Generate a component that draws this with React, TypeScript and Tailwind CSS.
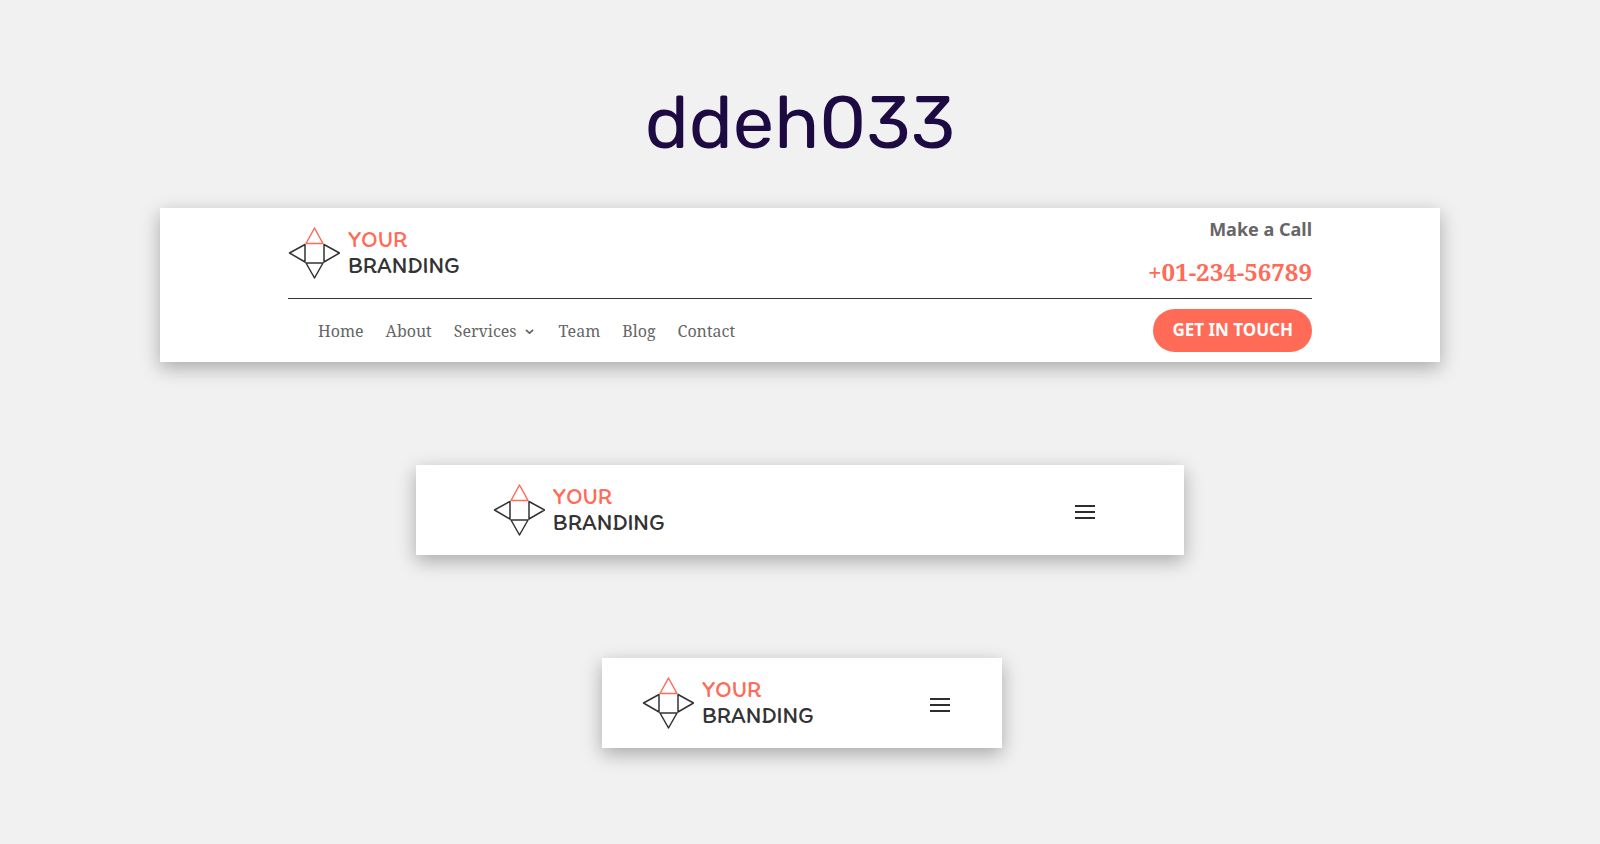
function Logo() {
  return (
    <a href="#" className="flex items-center gap-2">
      <svg viewBox="0 0 52 52" className="size-[52px] fill-none" strokeWidth="1.5" strokeLinejoin="round" aria-hidden="true">
        <path className="stroke-[#333333]" d="M17 17.5v17.500L1.500 26zM36 17.500v17.500L51.500 26zM18 36h17L26.500 51z" />
        <path className="stroke-[#ff6b57]" d="M18 16.500h17L26.500 1z" />
      </svg>
      <span className="pb-0.5 font-['Itim','Inter',sans-serif] text-[23px] leading-[26px] text-[#333333]">
        <span className="block text-[#ff6b57]">YOUR</span>
        <span className="block">BRANDING</span>
      </span>
    </a>
  );
}

function MenuButton() {
  return (
    <button type="button" aria-label="Open menu" className="mt-1 mr-3 flex w-5 cursor-pointer flex-col gap-1">
      <span className="h-0.5 w-full bg-[#2e2e2e]" />
      <span className="h-0.5 w-full bg-[#2e2e2e]" />
      <span className="h-0.5 w-full bg-[#2e2e2e]" />
    </button>
  );
}

const card = "bg-white shadow-[0_6px_18px_rgba(0,0,0,0.3)]";

function CompactHeader({ width }: { width: string }) {
  return (
    <header className={`${card} ${width}`}>
      <div className="mx-auto flex w-4/5 items-center justify-between pt-[18px] pb-[18px]">
        <Logo />
        <MenuButton />
      </div>
    </header>
  );
}

const links = ["Home", "About", "Services", "Team", "Blog", "Contact"];

export default function App() {
  return (
    <main className="flex min-h-screen flex-col items-center bg-[#f1f1f1] pt-20 pb-24">
      <h1 className="font-['Rubik','Inter',sans-serif] text-[74px] leading-[86px] text-[#1d0a42]">ddeh033</h1>

      <header className={`${card} mt-[42px] w-4/5`}>
        <div className="mx-auto w-4/5">
          <div className="flex justify-between border-b border-[#333333]">
            <div className="pt-[18px] pb-[18px]">
              <Logo />
            </div>
            <div className="pt-[7px] text-right">
              <p className="font-['Noto_Sans',sans-serif] text-[18px] leading-7 font-bold text-[#666666]">Make a Call</p>
              <a
                href="tel:+0123456789"
                className="mt-[13px] block font-['Noto_Serif','Liberation_Serif',serif] text-[24px] leading-8 font-bold text-[#ff6b57]"
              >
                +01-234-56789
              </a>
            </div>
          </div>
          <div className="flex items-center justify-between py-[10px]">
            <nav className="ml-[30px] flex gap-[22px] font-['Noto_Serif','Liberation_Serif',serif] text-[16px] leading-6 text-[#666666]">
              {links.map((label) => (
                <a key={label} href="#" className="flex items-center gap-2">
                  {label}
                  {label === "Services" && (
                    <svg viewBox="0 0 10 6" className="mt-0.5 mr-[3px] w-[9px] fill-none stroke-[#666666]" strokeWidth="2" aria-hidden="true">
                      <path d="M1 1l4 3.600L9 1" />
                    </svg>
                  )}
                </a>
              ))}
            </nav>
            <button
              type="button"
              className="cursor-pointer rounded-full bg-[#ff6b57] px-[19px] pt-[7px] pb-[9px] font-['Noto_Sans',sans-serif] text-[17px] leading-[27px] font-bold text-white"
            >
              GET IN TOUCH
            </button>
          </div>
        </div>
      </header>

      <div className="mt-[103px] flex w-full justify-center">
        <CompactHeader width="w-[768px]" />
      </div>
      <div className="mt-[103px] flex w-full justify-center pl-1">
        <CompactHeader width="w-[400px]" />
      </div>
    </main>
  );
}
